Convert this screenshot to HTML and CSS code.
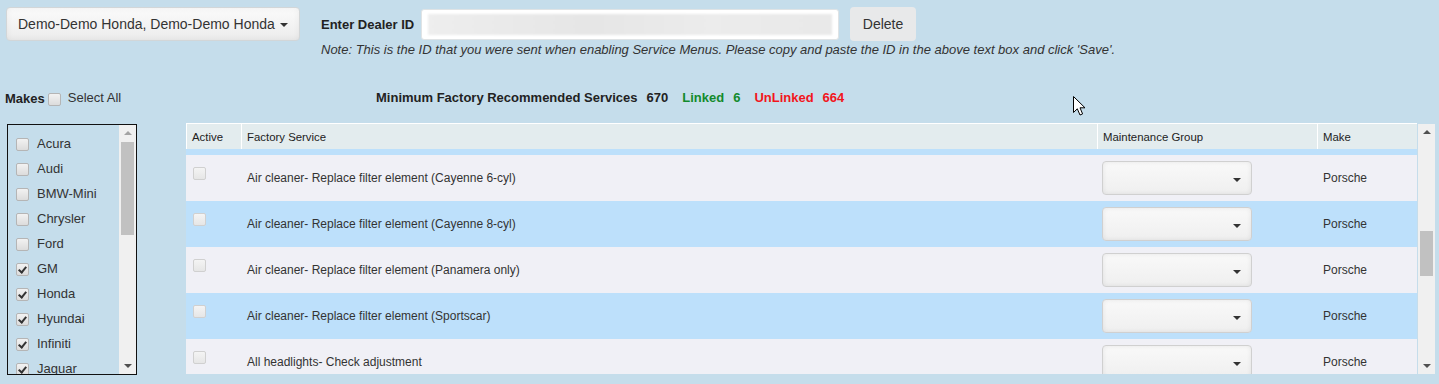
FILE: index.html
```html
<!DOCTYPE html>
<html lang="en">
<head>
    <meta charset="UTF-8">
    <title>Service Menus - Factory Services</title>
    <link rel="stylesheet" href="styles.css">
</head>
<body>
    <div class="topbar">
        <button class="dealer-select">Demo-Demo Honda, Demo-Demo Honda <span class="caret"></span></button>
        <div class="dealer">
            <div class="dealer-row">
                <label class="dealer-label">Enter Dealer ID</label>
                <div class="dealer-input"><div class="masked"></div></div>
                <button class="btn-delete">Delete</button>
            </div>
            <p class="note">Note: This is the ID that you were sent when enabling Service Menus. Please copy and paste the ID in the above text box and click 'Save'.</p>
        </div>
    </div>

    <div class="main">
        <div class="makes">
            <div class="makes-head">
                <b>Makes</b>
                <span class="cb"></span>
                <span class="select-all">Select All</span>
            </div>
            <div class="make-box">
                <ul class="make-list">
                    <li><span class="cb"></span>Acura</li>
                    <li><span class="cb"></span>Audi</li>
                    <li><span class="cb"></span>BMW-Mini</li>
                    <li><span class="cb"></span>Chrysler</li>
                    <li><span class="cb"></span>Ford</li>
                    <li><span class="cb checked"></span>GM</li>
                    <li><span class="cb checked"></span>Honda</li>
                    <li><span class="cb checked"></span>Hyundai</li>
                    <li><span class="cb checked"></span>Infiniti</li>
                    <li><span class="cb checked"></span>Jaguar</li>
                </ul>
                <div class="scrollbar">
                    <span class="arrow up off"></span>
                    <div class="track"><div class="thumb list-thumb"></div></div>
                    <span class="arrow down"></span>
                </div>
            </div>
        </div>

        <div class="services">
            <div class="stats">
                <span>Minimum Factory Recommended Services</span>
                <span class="num">670</span>
                <span class="linked">Linked</span>
                <span class="num linked">6</span>
                <span class="unlinked">UnLinked</span>
                <span class="num unlinked">664</span>
            </div>
            <div class="grid-wrap">
                <div class="grid">
                    <table class="grid-head">
                        <colgroup><col class="c-active"><col class="c-service"><col class="c-group"><col class="c-make"></colgroup>
                        <tr>
                            <th>Active</th>
                            <th>Factory Service</th>
                            <th>Maintenance Group</th>
                            <th>Make</th>
                        </tr>
                    </table>
                    <div class="grid-body">
                        <table class="rows">
                            <colgroup><col class="c-active"><col class="c-service"><col class="c-group"><col class="c-make"></colgroup>
                            <tr class="scrolled">
                                <td></td><td></td><td></td><td></td>
                            </tr>
                            <tr>
                                <td class="chk"><span class="cb off"></span></td>
                                <td>Air cleaner- Replace filter element (Cayenne 6-cyl)</td>
                                <td><div class="group-select"><span class="caret"></span></div></td>
                                <td>Porsche</td>
                            </tr>
                            <tr>
                                <td class="chk"><span class="cb off"></span></td>
                                <td>Air cleaner- Replace filter element (Cayenne 8-cyl)</td>
                                <td><div class="group-select"><span class="caret"></span></div></td>
                                <td>Porsche</td>
                            </tr>
                            <tr>
                                <td class="chk"><span class="cb off"></span></td>
                                <td>Air cleaner- Replace filter element (Panamera only)</td>
                                <td><div class="group-select"><span class="caret"></span></div></td>
                                <td>Porsche</td>
                            </tr>
                            <tr>
                                <td class="chk"><span class="cb off"></span></td>
                                <td>Air cleaner- Replace filter element (Sportscar)</td>
                                <td><div class="group-select"><span class="caret"></span></div></td>
                                <td>Porsche</td>
                            </tr>
                            <tr>
                                <td class="chk"><span class="cb off"></span></td>
                                <td>All headlights- Check adjustment</td>
                                <td><div class="group-select"><span class="caret"></span></div></td>
                                <td>Porsche</td>
                            </tr>
                        </table>
                    </div>
                </div>
                <div class="scrollbar grid-scroll">
                    <span class="arrow up"></span>
                    <div class="track"><div class="thumb grid-thumb"></div></div>
                    <span class="arrow down"></span>
                </div>
            </div>
        </div>
    </div>

    <svg class="pointer" width="14" height="21" viewBox="0 0 14 21">
        <path d="M0.5 0.5 L0.5 16.5 L4.3 12.8 L7 19 L9.6 17.9 L7 11.8 L12 11.8 Z" fill="#fff" stroke="#000" stroke-width="1"/>
    </svg>
</body>
</html>
```

FILE: styles.css
```css
body {
    margin: 0;
    height: 384px;
    overflow: hidden;
    background: #c5ddeb;
    font-family: "Liberation Sans", Arial, sans-serif;
    color: #333;
    position: relative;
}
.topbar {
    display: flex;
    align-items: flex-start;
    padding: 7px 0 0 6px;
}
.dealer-select {
    height: 34px;
    width: 294px;
    padding: 0 8px 0 11px;
    font-family: inherit;
    font-size: 14px;
    color: #333;
    text-align: left;
    white-space: nowrap;
    border: 1px solid #d2d6d8;
    border-radius: 4px;
    background: linear-gradient(#fbfbfb, #ececec);
    box-shadow: inset 0 0 6px rgba(0,0,0,0.06);
}
.caret {
    display: inline-block;
    width: 0;
    height: 0;
    margin-left: 1px;
    vertical-align: middle;
    border-top: 4px solid #333;
    border-left: 4px solid transparent;
    border-right: 4px solid transparent;
}
.dealer {
    margin-left: 21px;
}
.dealer-row {
    display: flex;
    align-items: center;
    height: 34px;
}
.dealer-label {
    font-size: 13px;
    font-weight: bold;
    color: #222;
    width: 100px;
}
.dealer-input {
    width: 418px;
    height: 31px;
    border: 1px solid #dfe3e5;
    border-radius: 3px;
    background: #fff;
    padding: 4px 6px;
    box-sizing: border-box;
    overflow: hidden;
}
.masked {
    height: 100%;
    background: linear-gradient(90deg, #eeeeee, #e6e6e6 40%, #ececec 70%, #e9e9e9);
    filter: blur(1px);
}
.btn-delete {
    margin-left: 11px;
    height: 34px;
    width: 66px;
    font-family: inherit;
    font-size: 14px;
    color: #333;
    border: none;
    border-radius: 4px;
    background: #e8e9ea;
}
.note {
    margin: 1px 0 0;
    font-size: 13px;
    font-style: italic;
    color: #333;
    line-height: 15px;
}

.main {
    display: flex;
    margin-top: 31px;
}
.makes {
    width: 181px;
    padding-left: 5px;
    flex-shrink: 0;
}
.makes-head {
    display: flex;
    align-items: center;
    height: 20px;
    font-size: 13px;
    color: #222;
}
.makes-head .cb {
    margin: 2px 7px 0 3px;
}
.select-all {
    color: #333;
    margin-top: -2px;
}
.cb {
    display: inline-block;
    width: 11px;
    height: 11px;
    border: 1px solid #b5b5b5;
    border-radius: 2px;
    background: linear-gradient(#f2f2f2, #dcdcdc);
    position: relative;
    flex-shrink: 0;
}
.cb.checked::after {
    content: "";
    position: absolute;
    left: 3px;
    top: 1px;
    width: 3px;
    height: 6px;
    border: solid #333;
    border-width: 0 2px 2px 0;
    transform: rotate(40deg);
}
.cb.off {
    border-color: #d0d0d0;
    background: linear-gradient(#f4f4f4, #e6e6e6);
}
.make-box {
    display: flex;
    width: 128px;
    height: 249px;
    margin: 16px 0 0 2px;
    border: 1px solid #111;
    overflow: hidden;
}
.make-list {
    list-style: none;
    margin: 0;
    padding: 6px 0 0 8px;
    flex: 1;
    font-size: 13px;
    color: #333;
}
.make-list li {
    display: flex;
    align-items: center;
    height: 25px;
}
.make-list .cb {
    margin: 2px 8px 0 0;
}

.scrollbar {
    width: 17px;
    background: #f0f0f0;
    display: flex;
    flex-direction: column;
    align-items: center;
    flex-shrink: 0;
}
.arrow {
    width: 0;
    height: 0;
    margin: 6px 0;
    border-left: 4px solid transparent;
    border-right: 4px solid transparent;
}
.arrow.up {
    border-bottom: 4px solid #505050;
}
.arrow.up.off {
    border-bottom-color: #a3a3a3;
}
.arrow.down {
    border-top: 4px solid #505050;
}
.track {
    flex: 1;
    width: 13px;
}
.thumb {
    width: 13px;
    background: #c1c1c1;
}
.list-thumb {
    height: 93px;
    margin-top: 1px;
}
.grid-thumb {
    height: 45px;
    margin-top: 91px;
}

.services {
    flex: 1;
}
.stats {
    display: flex;
    height: 20px;
    line-height: 20px;
    margin-left: 190px;
    font-size: 13px;
    font-weight: bold;
    color: #222;
}
.stats .num {
    margin: 0 14px 0 9px;
}
.linked {
    color: #128a2c;
}
.unlinked {
    color: #f2151c;
}
.grid-wrap {
    display: flex;
    margin-top: 15px;
    width: 1249px;
}
.grid {
    width: 1231px;
    height: 251px;
    margin-right: 1px;
    overflow: hidden;
}
.grid table {
    width: 1231px;
    table-layout: fixed;
    border-collapse: collapse;
}
.c-active { width: 55px; }
.c-service { width: 856px; }
.c-group { width: 220px; }
.c-make { width: 100px; }
.grid-head th {
    height: 25px;
    padding: 0 5px;
    text-align: left;
    font-size: 11.4px;
    font-weight: normal;
    color: #222;
    background: #e3ecee;
    border: 1px solid #fff;
    border-bottom: none;
}
.grid-body {
    height: 225px;
    overflow: hidden;
}
.rows {
    margin-top: -40px;
    font-size: 12px;
    color: #333;
}
.rows tr:nth-child(odd) {
    background: #bde0fb;
}
.rows tr:nth-child(even) {
    background: #f0f0f6;
}
.rows td {
    height: 46px;
    padding: 0 6px;
}
.rows td.chk {
    vertical-align: top;
    padding-left: 7px;
}
.rows td.chk .cb {
    margin-top: 12px;
}
.group-select {
    width: 150px;
    height: 34px;
    margin-left: -1px;
    border: 1px solid #d0d0d0;
    border-radius: 4px;
    background: linear-gradient(#f9f9f9, #efefef);
    box-shadow: inset 0 0 5px rgba(0,0,0,0.08);
    display: flex;
    align-items: center;
    justify-content: flex-end;
    padding-right: 10px;
    box-sizing: border-box;
}
.group-select .caret {
    margin-top: 4px;
}
.grid-scroll {
    height: 250px;
    margin-top: 1px;
}

.pointer {
    position: absolute;
    left: 1073px;
    top: 96px;
}
```
